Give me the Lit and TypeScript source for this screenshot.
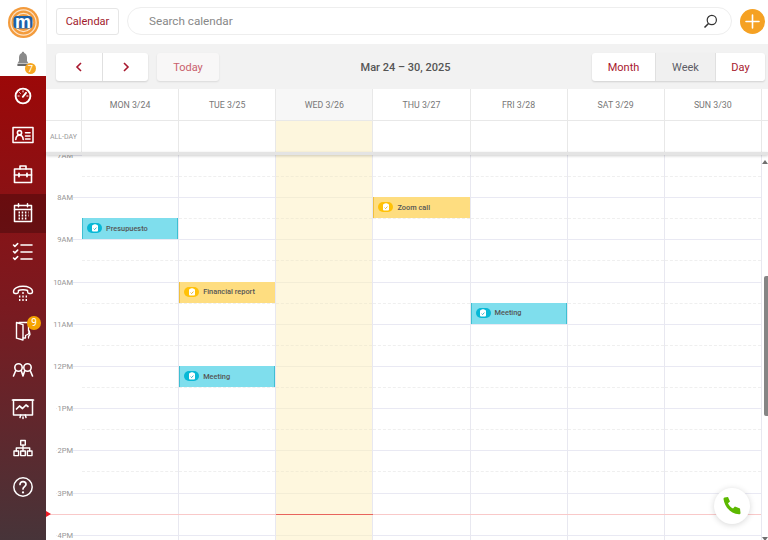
import { LitElement, html, css, svg } from "lit";
import { customElement } from "lit/decorators.js";

const S = (body: unknown, size = 24) => html`<svg width=${size} height=${size} viewBox="0 0 24 24" fill="none" stroke="#fff" stroke-width="1.5" stroke-linecap="round" stroke-linejoin="round">${body}</svg>`;

const icons = {
  gauge: svg`<circle cx="12" cy="12" r="7.4" stroke-width="1.9"/><path d="M12 6.8v1.2M7 12h1.2M15.8 12H17M8.6 8.600l.8.8" stroke-width="1"/><path d="M15 8.800l-3.200 4" stroke-width="1.900"/>`,
  card: svg`<rect x="2" y="4.500" width="20" height="15" stroke-width="1.500"/><circle cx="8.500" cy="9.700" r="2.100" stroke-width="1.600"/><path d="M4.800 16.500c.2-3 1.500-4.200 3.700-4.200s3.500 1.200 3.700 4.200" stroke-width="1.600"/><path d="M14.500 9.800h4.500M14.500 13h4.500M14.500 16h4.500" stroke-width="1.600"/>`,
  case: svg`<rect x="3.500" y="7" width="17" height="13.500" stroke-width="1.600"/><path d="M9 7V4h6v3M3.500 13h17" stroke-width="1.600"/><path d="M8 11.500v3M16 11.500v3" stroke-width="1.800"/>`,
  cal: svg`<rect x="3.500" y="4.500" width="17" height="16" stroke-width="1.500"/><path d="M3.500 8.500h17M7.500 2.800v3M16.500 2.800v3" stroke-width="1.500"/><path d="M7.500 11.500h1.500M10.700 11.500h1.500M13.900 11.500h1.500M17 11.500h.5M7.500 14.500h1.500M10.700 14.500h1.500M13.900 14.500h1.500M17 14.500h.5M7.500 17.500h1.500M10.700 17.500h1.500M13.900 17.500h1.500" stroke-width="1.800" stroke-linecap="butt"/>`,
  tasks: svg`<path d="M2.500 5l1.400 1.400L6.700 3.600M2.500 11.500l1.400 1.400 2.800-2.800M2.500 18l1.400 1.400 2.800-2.800" stroke-width="1.500"/><path d="M10 5h11M10 12h11M10 19h11" stroke-width="1.600"/>`,
  phone: svg`<path d="M2.500 11.500C2.500 4.500 21.500 4.500 21.500 11.500c0 1.500-.7 2-1.600 2h-1.800c-1 0-1.500-.7-1.500-1.700v-1.300c-2-1-7.200-1-9.200 0v1.300c0 1-.5 1.700-1.500 1.700H4.100c-.9 0-1.600-.5-1.600-2z" stroke-width="1.400"/><path d="M8 16.500h1.400M11.300 16.500h1.400M14.600 16.500H16M8 20h1.400M11.300 20h1.400M14.600 20H16M11.300 13h1.400" stroke-width="2" stroke-linecap="butt"/>`,
  door: svg`<path d="M8 3.500H17.500V12" stroke-width="1.300"/><path d="M5.500 3.500l6.500 2.200V21l-6.500-1.800z" stroke-width="1.400"/><path d="M12 19h2.500M14.500 19v-2.500l3-1.500.8-3 .7 3.500-1.500 2v1.500" stroke-width="1.300"/>`,
  people: svg`<circle cx="7.500" cy="9.500" r="3.700" stroke-width="1.600"/><circle cx="16.500" cy="9.500" r="3.700" stroke-width="1.600"/><path d="M2.500 18l2.300-5.500M10.200 12.500l1.800 5.500 1.800-5.500M19.200 12.500l2.300 5.500" stroke-width="1.600"/>`,
  board: svg`<rect x="2.500" y="3" width="19" height="15" stroke-width="1.500"/><path d="M1.500 3h21M5.500 12l3-3 3 2.500 3.500-3.500 2 1.500" stroke-width="1.700"/><path d="M9 20.500l.7-2.500M15 20.500l-.7-2.500M12 20v1.500" stroke-width="1.500"/>`,
  org: svg`<rect x="9.700" y="4.500" width="4.600" height="4.600" stroke-width="1.400"/><rect x="3" y="15" width="4.600" height="4.600" stroke-width="1.400"/><rect x="9.700" y="15" width="4.600" height="4.600" stroke-width="1.400"/><rect x="16.400" y="15" width="4.600" height="4.600" stroke-width="1.400"/><path d="M12 9v6M5.300 15v-3h13.400v3" stroke-width="1.400"/>`,
  help: svg`<circle cx="12" cy="12" r="9.200" stroke-width="1.500"/><path d="M9 9.500c0-1.800 1.300-2.900 3-2.900s3 1.100 3 2.700c0 2.300-3 2.300-3 4.700" stroke-width="1.700"/><path d="M12 17.300v.2" stroke-width="2.200"/>`,
};

type Nav = { icon: keyof typeof icons; active?: boolean; badge?: string };
const nav: Nav[] = [
  { icon: "gauge" }, { icon: "card" }, { icon: "case" }, { icon: "cal", active: true },
  { icon: "tasks" }, { icon: "phone" }, { icon: "door", badge: "9" }, { icon: "people" },
  { icon: "board" }, { icon: "org" }, { icon: "help" },
];

const days = ["MON 3/24", "TUE 3/25", "WED 3/26", "THU 3/27", "FRI 3/28", "SAT 3/29", "SUN 3/30"];
const hours = ["7AM", "8AM", "9AM", "10AM", "11AM", "12PM", "1PM", "2PM", "3PM", "4PM"];
type Ev = { day: number; slot: number; title: string; kind: "blue" | "yellow" };
const events: Ev[] = [
  { day: 0, slot: 3, title: "Presupuesto", kind: "blue" },
  { day: 3, slot: 2, title: "Zoom call", kind: "yellow" },
  { day: 1, slot: 6, title: "Financial report", kind: "yellow" },
  { day: 4, slot: 7, title: "Meeting", kind: "blue" },
  { day: 1, slot: 10, title: "Meeting", kind: "blue" },
];
const SLOT = 21.1;

@customElement("app-root")
export class AppRoot extends LitElement {
  static styles = css`
    :host { display: block; width: 768px; height: 540px; overflow: hidden; font-family: Roboto, "Liberation Sans", sans-serif; background: #fff; }
    * { box-sizing: border-box; }
    .app { display: flex; width: 768px; height: 540px; overflow: hidden; }
    .side { width: 46px; flex: none; display: flex; flex-direction: column; }
    .brand { height: 76px; flex: none; background: #fff; display: flex; flex-direction: column; align-items: center; padding-top: 6px; }
    .bellwrap { position: relative; width: 24px; height: 16px; margin-top: 12px; display: flex; justify-content: center; }
    .bellbadge { position: absolute; left: 14px; top: 11.500px; width: 11px; height: 11px; border-radius: 50%; background: #f5a623; color: #fff; font-size: 9.500px; line-height: 11px; text-align: center; }
    .nav { flex: 1; padding-top: .5px; background: linear-gradient(180deg, #9c0808 0%, #7a1a20 50%, #473439 100%); }
    .item { height: 39.100px; display: flex; align-items: center; justify-content: center; position: relative; }
    .item.active { background: rgba(0, 0, 0, .24); }
    .badge { position: absolute; left: 27px; top: 5px; width: 14px; height: 14px; border-radius: 50%; background: #f5a300; color: #fff; font-size: 10px; line-height: 14px; text-align: center; }
    .main { flex: 1; min-width: 0; display: flex; flex-direction: column; position: relative; }
    .top { height: 44px; flex: none; display: flex; align-items: center; padding: 0 3px 2px 10px; background: #fff; border-left: 1px solid #f0f0f0; }
    .cal-btn { width: 63px; height: 27px; border: 1px solid #e6e6e6; border-radius: 3px; color: #a11a2c; font-size: 11px; display: flex; align-items: center; justify-content: center; margin-left: -1px; }
    .search { width: 605px; height: 28px; margin-left: 8px; border: 1px solid #eee; border-radius: 14px; display: flex; align-items: center; justify-content: space-between; padding: 0 13px 0 21px; color: #888; font-size: 11.700px; }
    .plus { width: 25px; height: 25px; margin-left: 8px; border-radius: 50%; background: #f5a123; display: flex; align-items: center; justify-content: center; }
    .tools { height: 45px; flex: none; background: #f2f2f2; display: flex; align-items: center; padding: 0 3px 0 10px; position: relative; }
    .group { display: flex; height: 28px; background: #fff; border-radius: 3px; box-shadow: 0 1px 2px rgba(0,0,0,.14); }
    .group > div { display: flex; align-items: center; justify-content: center; font-size: 11px; color: #a8182e; padding-top: 1px; }
    .group > div + div { border-left: 1px solid #e0e0e0; }
    .arrow { width: 46px; }
    .today { width: 62px; height: 28px; margin-left: 9px; padding-top: 1px; background: #f8f7f7; border-radius: 3px; box-shadow: 0 1px 2px rgba(0,0,0,.1); color: #c9606c; font-size: 11px; display: flex; align-items: center; justify-content: center; }
    .title { flex: 1; text-align: center; color: #555; font-size: 11px; font-weight: 500; padding-top: 1px; }
    .group .sel { background: #f0f0f0; color: #5d5d66; }
    .m { width: 63px; }
    .w { width: 60px; }
    .d { width: 50px; }
    .cols { display: grid; grid-template-columns: 36px repeat(7, 97.14px) 1fr; flex: none; background: #fff; }
    .cols > div { border-right: 1px solid #e8e8e8; }
    .cols > div:last-child { border-right: 0; }
    .head { height: 32px; border-bottom: 1px solid #e8e8e8; }
    .head > div { display: flex; align-items: center; justify-content: center; font-size: 8.800px; color: #777; }
    .head > div.now { background: #f7f7f7; }
    .all { height: 31px; }
    .all > div { display: flex; align-items: center; justify-content: center; }
    .all > div.now { background: #fdf6dd; }
    .allday { font-size: 7px; color: #9a9a9a; }
    .shade { height: 3px; flex: none; background: #e4e4e4; box-shadow: 0 1px 3px rgba(0,0,0,.2); position: relative; z-index: 2; }
    .body { flex: 1; min-height: 0; overflow: hidden; position: relative; display: grid; grid-template-columns: 36px repeat(7, 97.14px) 1fr; align-items: start; background: #fff; }
    .gutter { position: relative; }
    .hr { height: 42.200px; position: relative; }
    .hr::after { content: ""; position: absolute; left: 10px; right: 0; top: 0; height: 1px; background: #e9e9f3; }
    .hr span { position: absolute; right: 9px; top: -4px; font-size: 7.500px; line-height: 10px; color: #959595; background: #fff; z-index: 1; padding-left: 1px; }
    .col { position: relative; border-right: 1px solid #e8e8f0; }
    .col.now { background: #fef7de; }
    .slot { height: 21.100px; position: relative; }
    .slot::after { content: ""; position: absolute; left: 0; right: 0; bottom: -1px; border-bottom: 1px dashed #efefef; }
    .slot.h::after { border-bottom: 1px solid #e9e9f3; }
    .col.now .slot::after { border-bottom-color: #f3edd6; }
    .ev { position: absolute; left: 0; right: 0; display: flex; align-items: center; gap: 4px; padding-left: 4px; padding-bottom: 1px; font-size: 7.400px; font-weight: 500; color: #555; border-left: 1px solid; height: 21px; z-index: 1; }
    .ev.blue { background: #7fdeed; border-color: #3fbfd2; border-right: 1px solid #3fbfd2; }
    .ev.yellow { background: #fedd80; border-color: #f0c040; }
    .pill { width: 15px; height: 10px; border-radius: 5px; display: flex; align-items: center; justify-content: center; }
    .blue .pill { background: #08b8d6; }
    .yellow .pill { background: #ffc107; }
    .blue .tick { stroke: #08a4c0; }
    .yellow .tick { stroke: #e0a800; }
    .nowline { position: absolute; left: 0; right: 7px; top: 359px; height: 1px; background: #f9c9c9; z-index: 2; }
    .nowtoday { position: absolute; left: 230.300px; width: 97px; top: 359px; height: 1px; background: #e8645c; z-index: 3; }
    .tri { position: absolute; left: 0; top: 356px; border-left: 5px solid #ee1c25; border-top: 3.500px solid transparent; border-bottom: 3.500px solid transparent; z-index: 3; }
    .thumb { position: absolute; right: 0; top: 121px; width: 4px; height: 140px; background: #858585; border-radius: 2px 0 0 2px; z-index: 4; }
    .sa { position: absolute; right: 0; width: 0; z-index: 4; border-left: 3px solid transparent; border-right: 3px solid transparent; }
    .sa.up { top: 5px; border-bottom: 4px solid #707070; }
    .sa.down { bottom: -1px; border-top: 4px solid #707070; }
    .fab { position: absolute; left: 668px; top: 333px; width: 36px; height: 36px; border-radius: 50%; background: #fff; box-shadow: 0 1px 6px rgba(0,0,0,.16); display: flex; align-items: center; justify-content: center; z-index: 5; }
    .logo text { font-family: "Liberation Sans", sans-serif; font-weight: 700; font-size: 18px; fill: #fff; }
  `;

  private check() {
    return html`<svg width="8" height="8" viewBox="0 0 8 8"><rect x="1" y="1" width="6" height="6.500" rx="1" fill="#fff"/><rect x="2.500" y=".3" width="3" height="1.500" fill="#fff"/><path class="tick" d="M2.600 4.600l1 1 1.800-2" stroke-width=".8" fill="none"/></svg>`;
  }

  render() {
    return html`<div class="app">
      <aside class="side">
        <div class="brand">
          <svg class="logo" width="33" height="33" viewBox="0 0 33 33">
            <circle cx="16.500" cy="16.500" r="15.500" fill="#f39b3c"/>
            <circle cx="16.500" cy="16.500" r="13.200" fill="#fde3c8"/>
            <circle cx="16.500" cy="16.500" r="12" fill="#f39b3c"/>
            <circle cx="16.500" cy="16.500" r="9.700" fill="#fde3c8"/>
            <circle cx="16.500" cy="16.500" r="8.500" fill="#f39b3c"/>
            <rect x="6.500" y="10" width="19" height="12.500" rx="3.500" fill="#1c5fa8"/>
            <text x="16" y="21.500" text-anchor="middle">m</text>
          </svg>
          <div class="bellwrap">
            <svg width="16" height="16" viewBox="0 0 20 20"><path d="M10 1c-.9 0-1.500.6-1.500 1.500C6 3.300 5 5.500 5 8.500v4L3 15.500h14l-2-3v-4c0-3-1-5.200-3.500-6C11.500 1.600 10.900 1 10 1z" fill="#8a8a8a"/><path d="M3 17.500h13" stroke="#444" stroke-width="2"/></svg>
            <span class="bellbadge">7</span>
          </div>
        </div>
        <nav class="nav">
          ${nav.map(n => html`<div class="item ${n.active ? "active" : ""}">${S(icons[n.icon])}${n.badge ? html`<span class="badge">${n.badge}</span>` : ""}</div>`)}
        </nav>
      </aside>
      <section class="main">
        <div class="top">
          <div class="cal-btn">Calendar</div>
          <div class="search"><span>Search calendar</span>
            <svg width="15" height="15" viewBox="0 0 15 15" fill="none" stroke="#333"><circle cx="8.800" cy="6" r="4.600" stroke-width="1.200"/><path d="M5.500 9.500L1.500 13.500" stroke-width="1.600"/></svg>
          </div>
          <div class="plus"><svg width="15" height="15" viewBox="0 0 15 15" stroke="#fff" stroke-width="1.600" stroke-linecap="round"><path d="M7.500 1v13M1 7.500h13"/></svg></div>
        </div>
        <div class="tools">
          <div class="group">
            <div class="arrow"><svg width="8" height="10" viewBox="0 0 8 10" fill="none" stroke="#a8182e" stroke-width="1.600"><path d="M6 1L2 5l4 4"/></svg></div>
            <div class="arrow"><svg width="8" height="10" viewBox="0 0 8 10" fill="none" stroke="#a8182e" stroke-width="1.600"><path d="M2 1l4 4-4 4"/></svg></div>
          </div>
          <div class="today">Today</div>
          <div class="title">Mar 24 – 30, 2025</div>
          <div class="group">
            <div class="m">Month</div>
            <div class="w sel">Week</div>
            <div class="d">Day</div>
          </div>
        </div>
        <div class="cols head">
          <div></div>
          ${days.map((d, i) => html`<div class=${i === 2 ? "now" : ""}>${d}</div>`)}
          <div></div>
        </div>
        <div class="cols all">
          <div><span class="allday">ALL-DAY</span></div>
          ${days.map((_, i) => html`<div class=${i === 2 ? "now" : ""}></div>`)}
          <div></div>
        </div>
        <div class="shade"></div>
        <div class="body">
          <div class="gutter">
            ${hours.map(h => html`<div class="hr"><span>${h}</span></div>`)}
          </div>
          ${days.map((_, d) => html`<div class="col ${d === 2 ? "now" : ""}">
            ${Array.from({ length: 19 }, (_, s) => html`<div class="slot ${s % 2 ? "h" : ""}"></div>`)}
            ${events.filter(e => e.day === d).map(e => html`<div class="ev ${e.kind}" style="top:${(e.slot * SLOT).toFixed(1)}px">
              <span class="pill">${this.check()}</span>${e.title}</div>`)}
          </div>`)}
          <div></div>
          <div class="nowline"></div>
          <div class="nowtoday"></div>
          <div class="tri"></div>
          <div class="thumb"></div>
          <div class="sa up"></div>
          <div class="sa down"></div>
          <div class="fab"><svg width="20" height="20" viewBox="0 0 20 20"><path d="M2.500 1.500L6 1l2 4.500-2 1.800c1 2.300 2.500 3.900 5 5.200l1.900-2L18 12.500 18.500 17c0 .8-.5 1.300-1.500 1.300C9 18 2.500 11 1.500 3c0-.8.300-1.300 1-1.500z" fill="#5cb800"/></svg></div>
        </div>
      </section>
    </div>`;
  }
}
